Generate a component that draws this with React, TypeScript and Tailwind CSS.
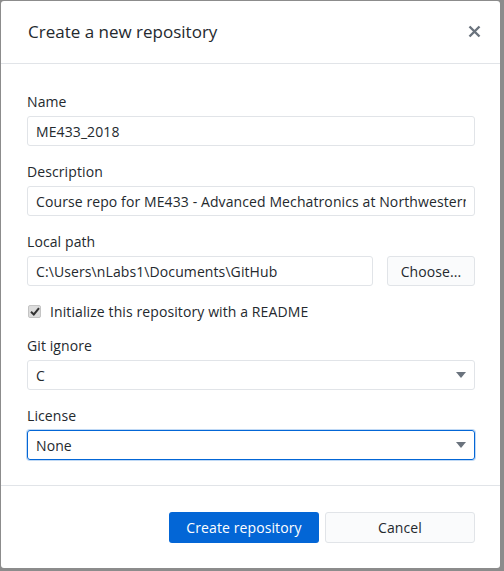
import React from "react";

const Caret = () => (
    <svg width="10" height="6" viewBox="0 0 10 6" className="absolute right-[8px] top-1/2 -translate-y-1/2">
        <path d="M0 0 L10 0 L5 6 Z" fill="#6a737d" />
    </svg>
);

export default function App() {
    return (
        <div
            className="w-[504px] h-[571px] bg-[#8c8c8c] pl-px pt-px text-[#24292e] tracking-[0.1px]"
            style={{ fontFamily: '"Open Sans", "Noto Sans", sans-serif' }}
        >
            <div className="w-[499px] h-[567px] bg-white rounded-[3px] flex flex-col">
                {/* Header */}
                <div className="h-[63px] flex items-center justify-between pl-[26px] pr-[25px] border-b border-[#e1e4e8]">
                    <h1 className="text-[17px] font-medium tracking-normal pl-[1px] pb-px">Create a new repository</h1>
                    <svg width="13" height="13" viewBox="0 0 13 13" className="mr-[-6px] mb-px">
                        <path d="M1.5 1.5 L11.5 11.5 M11.5 1.5 L1.5 11.5" stroke="#6a737d" strokeWidth="2.4" />
                    </svg>
                </div>

                {/* Form */}
                <div className="pl-[26px] pr-[25px] pt-[28px] pb-[25px] border-b border-[#e1e4e8] text-[14px]">
                    <label className="block leading-[20px] mb-1">Name</label>
                    <div className="h-[30px] border border-[#e1e4e8] rounded-[3px] px-2 flex items-center mb-4">
                        ME433_2018
                    </div>

                    <label className="block leading-[20px] mb-1">Description</label>
                    <div className="h-[30px] border border-[#e1e4e8] rounded-[3px] px-2 flex items-center mb-4 overflow-hidden whitespace-nowrap">
                        <span className="overflow-hidden block">Course repo for ME433 - Advanced Mechatronics at Northwestern</span>
                    </div>

                    <label className="block leading-[20px] mb-1">Local path</label>
                    <div className="flex gap-[14px] mb-4">
                        <div className="flex-1 h-[30px] border border-[#e1e4e8] rounded-[3px] px-2 flex items-center">
                            C:\Users\nLabs1\Documents\GitHub
                        </div>
                        <button className="w-[88px] h-[30px] border border-[#e1e4e8] rounded-[3px] bg-[#fafbfc] text-[14px]">
                            Choose...
                        </button>
                    </div>

                    <div className="flex items-center h-[18px] mb-4">
                        <span className="w-[13px] h-[13px] ml-px rounded-[2px] bg-[#dcdcdc] border border-[#c4c4c4] flex items-center justify-center">
                            <svg width="10" height="9" viewBox="0 0 10 9">
                                <path d="M1 4.8 L3.8 7.5 L9 1.2" stroke="#333" strokeWidth="2" fill="none" />
                            </svg>
                        </span>
                        <span className="ml-[9px]">Initialize this repository with a README</span>
                    </div>

                    <label className="block leading-[20px] mb-1">Git ignore</label>
                    <div className="relative h-[30px] border border-[#e1e4e8] rounded-[3px] px-2 flex items-center mb-4">
                        C
                        <Caret />
                    </div>

                    <label className="block leading-[20px] mb-1">License</label>
                    <div className="relative h-[30px] border border-[#0366d6] rounded-[3px] px-2 flex items-center shadow-[0_0_0_1px_rgba(3,102,214,0.25)]">
                        None
                        <Caret />
                    </div>
                </div>

                {/* Footer */}
                <div className="flex justify-end gap-[6px] pl-[26px] pr-[25px] pt-[26px]">
                    <button className="w-[150px] h-[31px] rounded-[3px] bg-[#0366d6] text-white text-[14px]">
                        Create repository
                    </button>
                    <button className="w-[150px] h-[31px] rounded-[3px] bg-[#fafbfc] border border-[#e1e4e8] text-[14px]">
                        Cancel
                    </button>
                </div>
            </div>
        </div>
    );
}
